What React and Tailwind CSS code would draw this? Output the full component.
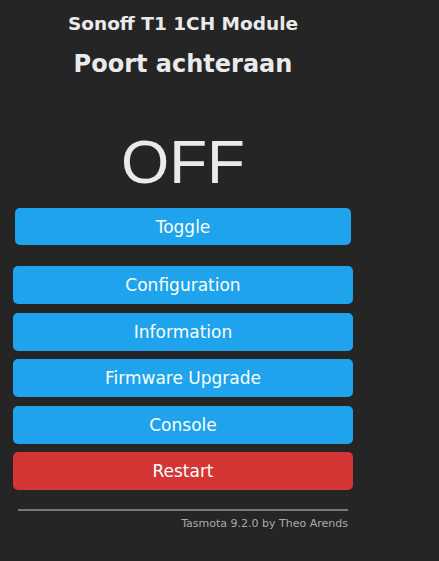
export default function App() {
  const buttons = ["Configuration", "Information", "Firmware Upgrade", "Console"];
  return (
    <div className="min-h-screen bg-[#252525] text-[#eaeaea] font-['DejaVu_Sans',Verdana,sans-serif]">
      <div className="w-[350px] ml-[8px] p-[5px]">
        <div className="text-center">
          <h3 className="pt-[8px] text-[18.5px] leading-[22px] font-bold">Sonoff T1 1CH Module</h3>
          <h2 className="mt-[14px] text-[24px] leading-[30px] font-bold">Poort achteraan</h2>
        </div>

        <div className="mt-[48px] px-[2px] text-center">
          <div className="text-[62px] leading-[70px] font-['Liberation_Sans',Arial,sans-serif]">OFF</div>
          <button className="mt-[11px] w-full h-[37px] pt-[2px] rounded-[5px] bg-[#1fa3ec] text-[#faffff] text-[17px]">
            Toggle
          </button>
        </div>

        <div className="mt-[21px] flex flex-col gap-[8.5px]">
          {buttons.map((b) => (
            <button
              key={b}
              className="w-full h-[38px] pt-[2px] rounded-[5px] bg-[#1fa3ec] text-[#faffff] text-[17px]"
            >
              {b}
            </button>
          ))}
          <button className="w-full h-[38px] pt-[2px] rounded-[5px] bg-[#d43535] text-[#faffff] text-[17px]">
            Restart
          </button>
        </div>

        <div className="mt-[19px] mx-[5px] border-t-2 border-[#777]" />
        <div className="mt-[5px] mx-[5px] text-right text-[11px] text-[#aaa]">
          Tasmota 9.2.0 by Theo Arends
        </div>
      </div>
    </div>
  );
}
